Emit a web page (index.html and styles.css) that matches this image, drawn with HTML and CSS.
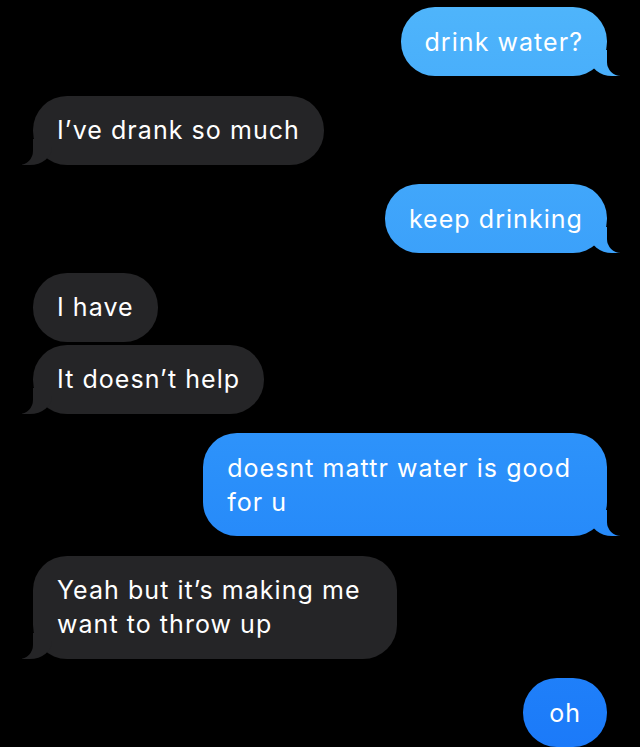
FILE: index.html
```html
<!DOCTYPE html>
<html lang="en">
<head>
<meta charset="utf-8">
<title>Messages</title>
<link rel="stylesheet" href="styles.css">
</head>
<body>
<div class="thread">
  <div class="bubble sent tail">drink water?</div>
  <div class="bubble recv tail">I’ve drank so much</div>
  <div class="bubble sent tail">keep drinking</div>
  <div class="bubble recv grouped">I have</div>
  <div class="bubble recv tail">It doesn’t help</div>
  <div class="bubble sent tail multi">doesnt mattr water is good<br>for u</div>
  <div class="bubble recv tail multi">Yeah but it’s making me<br>want to throw up</div>
  <div class="bubble sent oh">oh</div>
</div>
</body>
</html>
```
FILE: styles.css
```css
html, body {
  margin: 0;
  padding: 0;
  background: #000;
}
body {
  width: 640px;
  height: 747px;
  overflow: hidden;
}
.thread {
  display: flex;
  flex-direction: column;
  gap: 19.5px;
  padding: 7px 33px 0 33px;
  font-family: Inter, "Noto Sans", sans-serif;
  font-size: 25px;
  letter-spacing: 1.05px;
  line-height: 34px;
  color: #fff;
}
.bubble {
  position: relative;
  box-sizing: border-box;
  padding: 17.5px 24px;
  border-radius: 34px;
  width: fit-content;
  white-space: nowrap;
}
.bubble.multi {
  padding-right: 36px;
}
.bubble.grouped {
  margin-bottom: -16.5px;
}
.sent {
  align-self: flex-end;
  background: linear-gradient(to bottom, #4fb5fb 0px, #2a8ffa 480px, #1b7af9 747px) fixed;
}
.recv {
  align-self: flex-start;
  background: #252527;
}
.oh {
  padding-left: 26px;
  padding-right: 26px;
}
.tail::before,
.tail::after {
  content: "";
  position: absolute;
  bottom: 0;
  height: 26px;
}
.sent.tail::before {
  right: -13px;
  width: 30px;
  background: linear-gradient(to bottom, #4fb5fb 0px, #2a8ffa 480px, #1b7af9 747px) fixed;
  border-bottom-left-radius: 22px 18px;
}
.sent.tail::after {
  right: -40px;
  width: 40px;
  background: #000;
  border-bottom-left-radius: 14px;
}
.recv.tail::before {
  left: -11px;
  width: 30px;
  background: #252527;
  border-bottom-right-radius: 22px 18px;
}
.recv.tail::after {
  left: -40px;
  width: 40px;
  background: #000;
  border-bottom-right-radius: 14px;
}
```
